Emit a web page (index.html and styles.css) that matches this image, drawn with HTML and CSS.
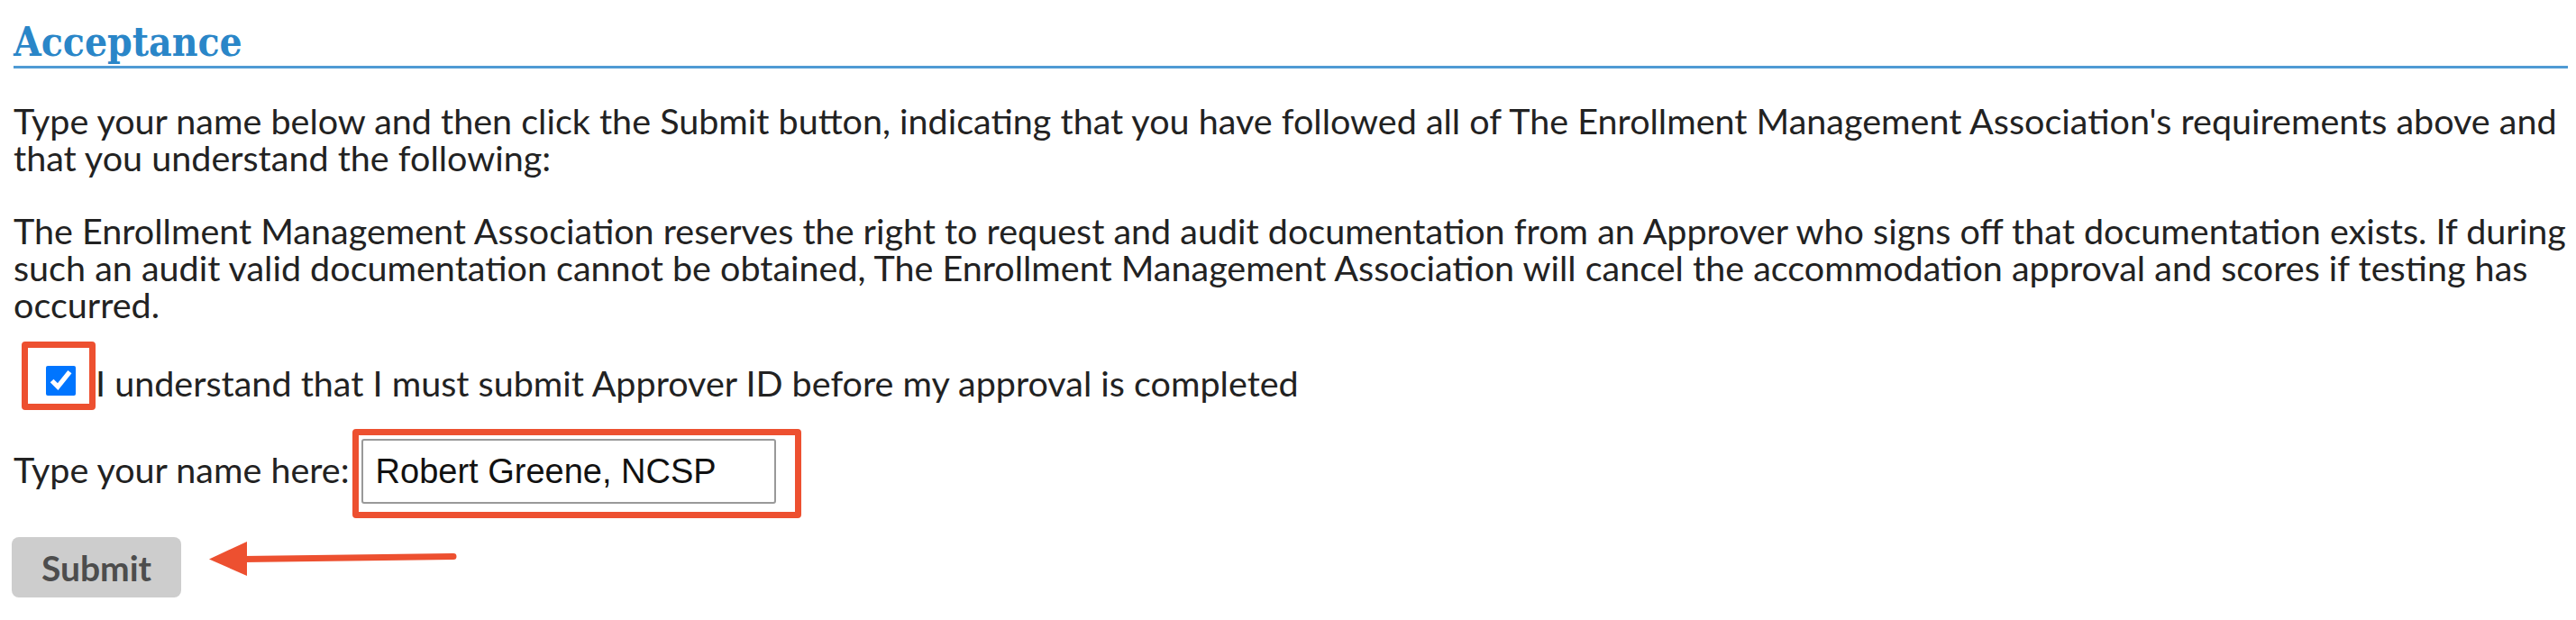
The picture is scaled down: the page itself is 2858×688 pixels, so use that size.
FILE: index.html
```html
<html>

<head>
  <title>Acceptance</title>
  <link rel="stylesheet" href="styles.css">
</head>

<body>
  <div class="section">
    <h2 class="section-title">Acceptance</h2>
    <p class="intro">Type your name below and then click the Submit button, indicating that you have followed all of The Enrollment Management Association's requirements above and that you understand the following:</p>
    <p class="terms">The Enrollment Management Association reserves the right to request and audit documentation from an Approver who signs off that documentation exists. If during such an audit valid documentation cannot be obtained, The Enrollment Management Association will cancel the accommodation approval and scores if testing has occurred.</p>

    <div class="agree-row">
      <span class="callout callout-check">
        <input type="checkbox" id="agree" checked />
      </span>
      <label for="agree">I understand that I must submit Approver ID before my approval is completed</label>
    </div>

    <div class="name-row">
      <label for="signature">Type your name here:</label>
      <span class="callout callout-input">
        <input type="text" id="signature" class="name-input" value="Robert Greene, NCSP" />
      </span>
    </div>

    <div class="submit-row">
      <button class="submit-btn">Submit</button>
      <svg class="pointer" width="280" height="42" viewBox="0 0 280 42">
        <line x1="38" y1="20.5" x2="271" y2="17.5" stroke="#ed5030" stroke-width="7" stroke-linecap="round" />
        <polygon points="0,20.5 42,1 42,39" fill="#ed5030" />
      </svg>
    </div>
  </div>
</body>

</html>
```

FILE: styles.css
```css
body {
  margin: 0;
  padding: 0 9px 0 15px;
  background: #fff;
  color: #222;
  font-family: 'Lato', 'Open Sans', sans-serif;
  font-size: 39.5px;
  line-height: 41px;
}

.section-title {
  margin: 0 0 37px;
  padding: 23px 0 2px;
  font-family: 'DejaVu Serif', serif;
  font-stretch: condensed;
  font-weight: bold;
  font-size: 44px;
  line-height: 48px;
  color: #2a86c8;
  border-bottom: 3px solid #4f9ad4;
}

.intro {
  margin: 0 0 40px;
}

.terms {
  margin: 0 0 21px;
}

.callout {
  border: 7px solid #ed5030;
  border-radius: 4px;
}

.agree-row {
  display: flex;
  align-items: flex-end;
  margin: 0 0 21px 9px;
}

.agree-row label {
  padding-bottom: 10px;
}

.callout-check {
  display: flex;
  padding: 20px 15px 9px 20px;
}

.callout-check input {
  width: 33px;
  height: 33px;
  margin: 0;
  accent-color: #0075ff;
}

.name-row {
  display: flex;
  align-items: baseline;
  margin-bottom: 21px;
}

.name-row label {
  margin-right: 3px;
}

.callout-input {
  display: flex;
  padding: 4px 21px 9px 3px;
}

.name-input {
  box-sizing: border-box;
  width: 460px;
  height: 72px;
  margin: 0;
  padding: 0 14px;
  border: 2px solid #999;
  border-radius: 3px;
  font-family: 'Liberation Sans', Arial, sans-serif;
  font-size: 38px;
  color: #111;
}

.submit-row {
  display: flex;
  align-items: flex-start;
}

.submit-btn {
  width: 188px;
  height: 67px;
  margin-left: -2px;
  padding: 0;
  border: 0;
  border-radius: 8px;
  background: #cdcdcd;
  color: #4d4d4d;
  font-family: 'Lato', sans-serif;
  font-weight: bold;
  font-size: 39px;
}

.pointer {
  margin: 4px 0 0 31px;
}
```
